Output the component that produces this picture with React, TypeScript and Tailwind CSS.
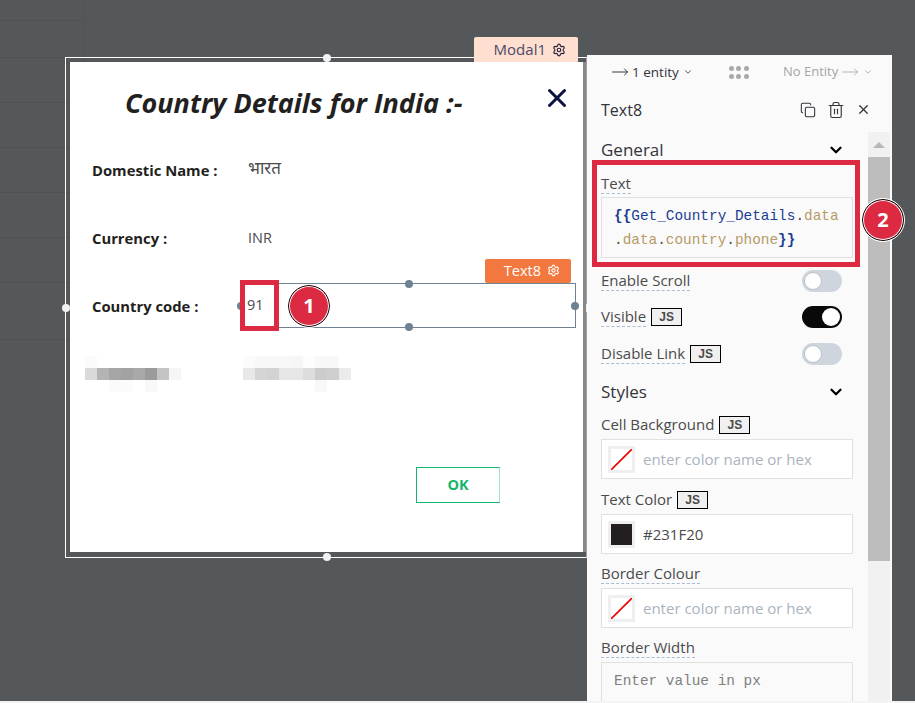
import React from 'react';
import { ChevronDown, Copy, MoveRight, Settings, Trash2, X } from 'lucide-react';

const sans = "font-['Open_Sans','Noto_Sans',sans-serif]";

const mosaicLeft = [
  ['#fbfbfb', '#ffffff', '#ffffff', '#ffffff', '#ffffff', '#ffffff', '#ffffff', '#ffffff'],
  ['#dadada', '#b4b4b4', '#a6a6a6', '#a2a2a2', '#a9a9a9', '#9b9b9b', '#c4c4c4', '#f6f6f6'],
  ['#ffffff', '#ffffff', '#fbfbfb', '#fbfbfb', '#ffffff', '#f8f8f8', '#ffffff', '#ffffff'],
];

const mosaicRight = [
  ['#fbfbfb', '#f8f8f8', '#f8f8f8', '#f8f8f8', '#f6f6f6', '#fdfdfd', '#f8f8f8', '#f8f8f8', '#ffffff'],
  ['#e8e8e8', '#d5d5d5', '#d2d2d2', '#e6e6e6', '#e6e6e6', '#dcdcdc', '#cccccc', '#cfcfcf', '#ebebeb'],
  ['#ffffff', '#ffffff', '#ffffff', '#ffffff', '#ffffff', '#ffffff', '#f8f8f8', '#ffffff', '#ffffff'],
];

function Mosaic({ rows }: { rows: string[][] }) {
  return (
    <div className="flex flex-col">
      {rows.map((row, i) => (
        <div key={i} className="flex">
          {row.map((color, j) => (
            <div key={j} className="w-3 h-3" style={{ backgroundColor: color }} />
          ))}
        </div>
      ))}
    </div>
  );
}

function Badge({ n, className }: { n: number; className: string }) {
  return (
    <div
      className={`absolute w-[42px] h-[42px] rounded-full bg-[#dc2a42] border border-black shadow-[inset_0_0_0_1px_#fff] outline outline-1 outline-white flex items-center justify-center text-white text-[20px] font-bold font-['Open_Sans',sans-serif] ${className}`}
    >
      {n}
    </div>
  );
}

function Handle({ className, color }: { className: string; color: string }) {
  return <div className={`absolute w-2 h-2 rounded-full ${color} ${className}`} />;
}

function JsTag() {
  return (
    <span className="ml-[5px] w-[31px] h-[18px] border border-black bg-[#f0f0f0] flex items-center justify-center text-[12px] leading-none font-bold text-[#4b4b4b] font-['Liberation_Sans',sans-serif]">
      JS
    </span>
  );
}

function Toggle({ on }: { on?: boolean }) {
  return (
    <div
      className={`w-10 h-[22px] rounded-full flex items-center px-[2px] ${on ? 'bg-[#090909] justify-end' : 'bg-[#ced5dc] justify-start'}`}
    >
      <div className={`w-[18px] h-[18px] rounded-full bg-white ${on ? '' : 'border border-[#b9c0c7]'}`} />
    </div>
  );
}

function PropLabel({ children, dashed }: { children: React.ReactNode; dashed?: boolean }) {
  return (
    <span className={`text-[15px] leading-[19px] text-[#4b4b4b] ${dashed ? 'border-b border-dashed border-[#a9bcd3]' : ''}`}>
      {children}
    </span>
  );
}

function ColorInput({ value }: { value?: string }) {
  return (
    <div className="h-[40px] w-[252px] border border-[#e0e0e0] bg-white flex items-center pl-[6px] mt-[5px]">
      <div className="w-[27px] h-[27px] border-[3px] border-[#efefef] bg-white flex items-center justify-center">
        {value ? (
          <div className="w-[21px] h-[21px] bg-[#231f20]" />
        ) : (
          <svg viewBox="0 0 21 21" className="w-[21px] h-[21px]">
            <line x1="0" y1="21" x2="21" y2="0" stroke="#f00000" strokeWidth="1.6" />
          </svg>
        )}
      </div>
      <span className={`ml-[8px] text-[15px] ${value ? 'text-[#4b4b4b]' : 'text-[#a9b4bf]'}`}>
        {value ?? 'enter color name or hex'}
      </span>
    </div>
  );
}

function SettingsPanel() {
  return (
    <div className={`w-[305px] mt-[55px] bg-[#fafafa] flex flex-col shrink-0 ${sans} relative`}>
      <div className="h-[34px] flex items-center pl-[24px] shrink-0 text-[13px]">
        <div className="flex items-center w-[118px] text-[#33333a]">
          <MoveRight className="w-[18px] h-[18px] mr-[3px]" strokeWidth={1.3} />
          <span className="text-[13.5px]">1 entity</span>
          <ChevronDown className="w-[10px] h-[10px] ml-[4px]" />
        </div>
        <div className="grid grid-cols-3 gap-x-[2px] gap-y-[3px] w-[20px]">
          {Array.from({ length: 6 }).map((_, i) => (
            <div key={i} className="w-[5px] h-[5px] rounded-full bg-[#a9a9a9]" />
          ))}
        </div>
        <div className="flex items-center ml-[34px] text-[#a5a5a5]">
          <span>No Entity</span>
          <MoveRight className="w-[18px] h-[18px] ml-[3px]" strokeWidth={1.1} />
          <ChevronDown className="w-[10px] h-[10px] ml-[4px]" />
        </div>
      </div>
      <div className="h-[43px] flex items-center pl-[14px] pr-[21px] shrink-0 -mt-[1px]">
        <span className="text-[16px] text-[#33333a] flex-1">Text8</span>
        <Copy className="w-4 h-4 text-[#33333a] mr-[11px]" strokeWidth={1.6} />
        <Trash2 className="w-[18px] h-[18px] text-[#33333a] mr-[11px]" strokeWidth={1.5} />
        <X className="w-[15px] h-[15px] text-[#33333a]" strokeWidth={2} />
      </div>
      <div className="flex flex-1 min-h-0 overflow-hidden mt-[1px]">
        <div className="w-[281px] pl-[14px] pt-[6px]">
          <div className="h-[24px] w-[244px] flex items-center justify-between">
            <span className="text-[17px] text-[#33333a]">General</span>
            <ChevronDown className="w-[18px] h-[18px] text-black" strokeWidth={3} />
          </div>
          <div className="mt-[12px] h-[19px] flex items-center">
            <PropLabel dashed>Text</PropLabel>
          </div>
          <div className="mt-[4px] w-[252px] h-[61px] border border-[#e0e0e0] px-[12px] flex flex-col justify-center font-['Liberation_Mono',monospace] text-[14.4px] leading-[24px] text-[#b79a66]">
            <div className="whitespace-nowrap">
              <span className="text-[#1c3d94]"><b>{'{{'}</b>Get_Country_Details</span>
              <span className="text-[#4b4b4b]">.</span>data
            </div>
            <div className="whitespace-nowrap">
              <span className="text-[#4b4b4b]">.</span>data<span className="text-[#4b4b4b]">.</span>country
              <span className="text-[#4b4b4b]">.</span>phone<b className="text-[#1c3d94]">{'}}'}</b>
            </div>
          </div>
          <div className="mt-[12px] h-[22px] w-[241px] flex items-center justify-between">
            <PropLabel dashed>Enable Scroll</PropLabel>
            <Toggle />
          </div>
          <div className="mt-[14px] h-[22px] w-[241px] flex items-center justify-between">
            <span className="flex items-center">
              <PropLabel dashed>Visible</PropLabel>
              <JsTag />
            </span>
            <Toggle on />
          </div>
          <div className="mt-[15px] h-[22px] w-[241px] flex items-center justify-between">
            <span className="flex items-center">
              <PropLabel dashed>Disable Link</PropLabel>
              <JsTag />
            </span>
            <Toggle />
          </div>
          <div className="mt-[15px] h-[24px] w-[244px] flex items-center justify-between">
            <span className="text-[17px] text-[#33333a]">Styles</span>
            <ChevronDown className="w-[18px] h-[18px] text-black" strokeWidth={3} />
          </div>
          <div className="mt-[11px] h-[19px] flex items-center">
            <PropLabel>Cell Background</PropLabel>
            <JsTag />
          </div>
          <ColorInput />
          <div className="mt-[11px] h-[19px] flex items-center">
            <PropLabel>Text Color</PropLabel>
            <JsTag />
          </div>
          <ColorInput value="#231F20" />
          <div className="mt-[10px] h-[19px] flex items-center">
            <PropLabel dashed>Border Colour</PropLabel>
          </div>
          <ColorInput />
          <div className="mt-[10px] h-[19px] flex items-center">
            <PropLabel dashed>Border Width</PropLabel>
          </div>
          <div className="mt-[5px] w-[252px] h-[40px] border border-[#e0e0e0] flex items-center pl-[12px] font-['Liberation_Mono',monospace] text-[14.4px] text-[#808080]">
            Enter value in px
          </div>
        </div>
        <div className="w-[22px] bg-[#f1f1f1] flex flex-col shrink-0">
          <div className="h-[25px] flex items-center justify-center">
            <div className="w-0 h-0 border-x-[6px] border-x-transparent border-b-[6px] border-b-[#b8b8b8]" />
          </div>
          <div className="h-[404px] bg-[#bdbdbd]" />
        </div>
      </div>
      <div className="absolute left-[5px] top-[105px] w-[268px] h-[107px] border-[5px] border-[#dc2a42]" />
      <Badge n={2} className="left-[275px] top-[144px]" />
    </div>
  );
}

function ModalFrame() {
  return (
    <div className="absolute left-[65px] top-[57px] w-[522px] h-[501px] border border-white border-r-[#a0a2a4]">
      <Handle color="bg-[#f2f2f2]" className="left-[257px] -top-[4px]" />
      <Handle color="bg-[#f2f2f2]" className="left-[257px] -bottom-[4px]" />
      <Handle color="bg-[#f2f2f2]" className="-left-[4px] top-[246px]" />
      <Handle color="bg-[#f2f2f2]" className="-right-[4px] top-[246px]" />
      <div className="absolute -top-[21px] right-[8px] w-[104px] h-[25px] rounded-t-[2px] bg-[#ffdfd0] flex items-center justify-end pr-[12px] text-[15px] text-[#4a4a68] gap-[6px]">
        <span>Modal1</span>
        <Settings className="w-[14px] h-[14px] text-[#26263a]" strokeWidth={2} />
      </div>
      <div className="absolute left-[4px] top-[4px] w-[516px] h-[490px] bg-white border-r-[3px] border-r-[#85878a]">
        <div className="h-[85px] pl-[55px] flex items-center justify-between pr-[11px]">
          <h1 className="text-[27px] font-bold italic text-[#231f20] -mt-[2px]">Country Details for India :-</h1>
          <X className="w-[30px] h-[30px] text-[#0b1140] -mt-[14px]" strokeWidth={2.4} />
        </div>
        <div className="pl-[22px] flex flex-col gap-[22px] text-[14.8px] text-[#231f20]">
          <div className="h-[46px] flex items-center">
            <span className="w-[156px] font-bold">Domestic Name :</span>
            <span className="text-[17px] text-[#4b4b4b] mt-[1px] font-['Noto_Sans_Devanagari','Lohit_Devanagari','Noto_Sans',sans-serif]">भारत</span>
          </div>
          <div className="h-[46px] flex items-center">
            <span className="w-[156px] font-bold">Currency :</span>
            <span className="text-[14.5px] text-[#4b4b4b]">INR</span>
          </div>
          <div className="h-[46px] flex items-center">
            <span className="w-[148px] font-bold">Country code :</span>
            <div className="relative w-[336px] h-[45px] -mt-[2px] border border-[#6f8294] flex items-center pl-[6px] text-[14.5px] text-[#4b4b4b]">
              91
              <Handle color="bg-[#6f8294]" className="left-[164px] -top-[4px]" />
              <Handle color="bg-[#6f8294]" className="left-[164px] -bottom-[4px]" />
              <Handle color="bg-[#6f8294]" className="-left-[4px] top-[18px]" />
              <Handle color="bg-[#6f8294]" className="-right-[4px] top-[18px]" />
              <div className="absolute -top-[25px] right-[4px] w-[86px] h-[24px] rounded-[2px] bg-[#f2783f] text-white flex items-center justify-end pr-[11px] gap-[6px]">
                <span>Text8</span>
                <Settings className="w-[13px] h-[13px]" strokeWidth={2} />
              </div>
              <div className="absolute -left-[1px] -top-[4px] w-[39px] h-[51px] border-[5px] border-[#dc2a42]" />
              <Badge n={1} className="left-[47px] top-[1px]" />
            </div>
          </div>
          <div className="h-[46px] flex items-center">
            <div className="w-[158px] -ml-[7px] mr-[-7px]">
              <Mosaic rows={mosaicLeft} />
            </div>
            <div className="ml-[7px]">
              <Mosaic rows={mosaicRight} />
            </div>
          </div>
        </div>
        <button className="mt-[70px] ml-[346px] w-[84px] h-[36px] border border-[#13b56b] border-r-[#9fe3c3] text-[#13b56b] text-[14.5px] font-bold flex items-center justify-center">
          OK
        </button>
      </div>
    </div>
  );
}

export default function App() {
  return (
    <div className={`w-[915px] h-[703px] flex flex-col overflow-hidden ${sans}`}>
      <div className="h-[701px] bg-[#54585b] flex overflow-hidden shrink-0">
        <div className="w-[587px] relative shrink-0">
          <div className="w-[85px] h-[340px] grid grid-rows-[21px_37px_45px_45px_45px_45px_45px_57px] border-r border-[#4e5255]">
            {Array.from({ length: 8 }).map((_, i) => (
              <div key={i} className="border-b border-[#4e5255]" />
            ))}
          </div>
          <ModalFrame />
        </div>
        <SettingsPanel />
      </div>
      <div className="flex-1 bg-[#f4f4f4]" />
    </div>
  );
}
